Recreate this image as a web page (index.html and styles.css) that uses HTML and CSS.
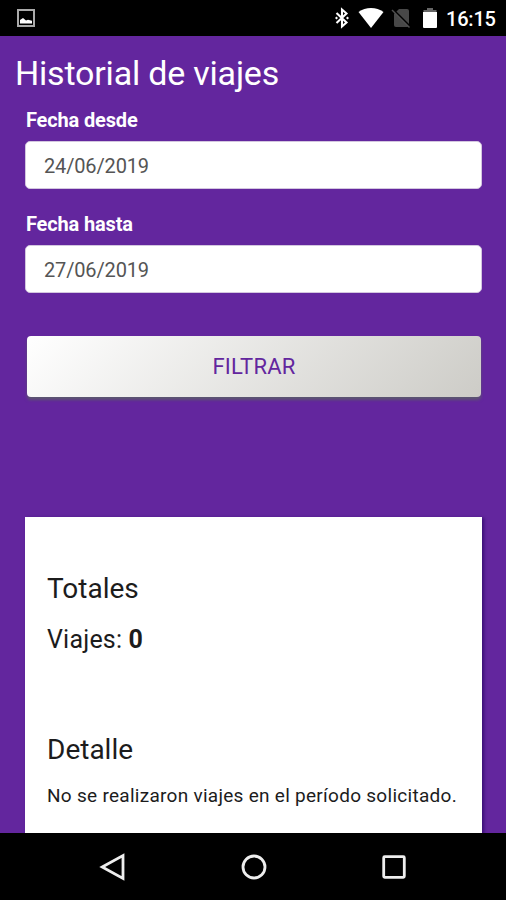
FILE: index.html
```html
<!DOCTYPE html>
<html lang="es">
<head>
  <meta charset="UTF-8">
  <meta name="viewport" content="width=device-width, initial-scale=1">
  <title>Historial de viajes</title>
  <link rel="stylesheet" href="styles.css">
</head>
<body>
  <header class="status-bar">
    <svg class="status-picture" width="18" height="18" viewBox="0 0 18 18">
      <rect x="1" y="1" width="16" height="16" fill="none" stroke="#aaa" stroke-width="2"/>
      <path d="M3 14.500V11l3-2 3 2.500 2-.8 4 1v2.800z" fill="#fff"/>
    </svg>
    <div class="status-icons">
      <svg width="14" height="22" viewBox="0 0 14 22">
        <path d="M1.500 6l10 9.500-4.500 4v-17l4.500 4L1.500 16" fill="none" stroke="#fff" stroke-width="2.100"/>
        <path d="M0 11l1.500-1.500L3 11l-1.500 1.500zM11 11l1.500-1.500L14 11l-1.500 1.500z" fill="#fff"/>
      </svg>
      <svg class="icon-wifi" width="26" height="22" viewBox="0 0 26 22">
        <path d="M13 21L.5 5Q6 1 13 1t12.500 4z" fill="#fff"/>
      </svg>
      <svg class="icon-sim" width="20" height="22" viewBox="0 0 20 22">
        <path d="M8 2h8q2 0 2 2v14q0 2-2 2H5q-2 0-2-2V7z" fill="#484848"/>
        <path d="M1.500 2l18 18" stroke="#000" stroke-width="2"/>
        <path d="M1 3l17.500 17.500" stroke="#505050" stroke-width="1.500"/>
      </svg>
      <svg class="icon-battery" width="14" height="22" viewBox="0 0 14 22">
        <path d="M4 1h6v2h3.500v3H.5V3H4z" fill="#666"/>
        <path d="M0 5h14v15q0 1-1 1H1q-1 0-1-1z" fill="#fff"/>
      </svg>
      <span class="clock">16:15</span>
    </div>
  </header>

  <main class="content">
    <h1>Historial de viajes</h1>

    <div class="filters">
      <label for="desde">Fecha desde</label>
      <input type="text" id="desde" value="24/06/2019">

      <label for="hasta">Fecha hasta</label>
      <input type="text" id="hasta" value="27/06/2019">

      <button type="button" class="btn-filtrar">FILTRAR</button>
    </div>

    <section class="card">
      <h2>Totales</h2>
      <p class="viajes">Viajes: <b>0</b></p>
      <h2>Detalle</h2>
      <p class="detalle">No se realizaron viajes en el período solicitado.</p>
    </section>
  </main>

  <nav class="nav-bar">
    <svg width="28" height="28" viewBox="0 0 28 28">
      <path d="M3.200 14L24 2.500v23z"/>
    </svg>
    <svg width="28" height="28" viewBox="0 0 28 28">
      <circle cx="14" cy="14" r="11"/>
    </svg>
    <svg width="28" height="28" viewBox="0 0 28 28">
      <rect x="3.700" y="3.700" width="20.600" height="20.600" rx="1"/>
    </svg>
  </nav>
</body>
</html>
```

FILE: styles.css
```css
* {
  box-sizing: border-box;
}
body {
  margin: 0;
  height: 900px;
  display: flex;
  flex-direction: column;
  overflow: hidden;
  font-family: Roboto, sans-serif;
  background: #63269e;
}
h1, h2, p {
  margin: 0;
  font-weight: 400;
}
.status-bar {
  height: 36px;
  flex-shrink: 0;
  display: flex;
  justify-content: space-between;
  align-items: center;
  padding: 0 10px 0 17px;
  background: #000;
}
.status-icons {
  display: flex;
  align-items: center;
}
.icon-wifi {
  margin-left: 9px;
}
.icon-sim {
  margin-left: 7px;
}
.icon-battery {
  margin-left: 12px;
}
.clock {
  margin-left: 9px;
  width: 50px;
  padding-top: 1px;
  font-size: 20px;
  font-weight: 500;
  letter-spacing: -0.2px;
  line-height: 22px;
  color: #fff;
  white-space: nowrap;
}
.content {
  flex: 1;
  min-height: 0;
  overflow: hidden;
  padding-top: 17px;
}
h1 {
  padding-left: 15px;
  font-size: 34px;
  line-height: 40px;
  letter-spacing: -0.2px;
  color: #fff;
}
.filters {
  display: flex;
  flex-direction: column;
  padding: 16px 24px 0 25px;
}
label {
  padding-left: 1px;
  margin-bottom: 9px;
  font-size: 20px;
  font-weight: 700;
  line-height: 23px;
  letter-spacing: -0.15px;
  color: #fff;
}
input {
  height: 48px;
  margin-bottom: 24px;
  padding: 1px 18px 0;
  border: 1px solid #d3c6df;
  border-radius: 5px;
  background: #fff;
  font-family: inherit;
  font-size: 20px;
  letter-spacing: -0.15px;
  color: #555;
}
.btn-filtrar {
  height: 61px;
  margin: 19px 1px 0 2px;
  border: none;
  border-radius: 4px;
  background: linear-gradient(135deg, #fff 0%, #cdccc7 100%);
  box-shadow: 0 3px 3px #5c5570;
  font-family: inherit;
  font-size: 22px;
  letter-spacing: 0.2px;
  color: #63269e;
}
.card {
  height: 400px;
  margin: 120px 24px 0 25px;
  padding: 55px 22px 0;
  background: #fff;
  box-shadow: 2px 1px 3px rgba(30, 0, 90, 0.6);
  color: #1c1c1c;
}
h2 {
  font-size: 28px;
  line-height: 34px;
}
.viajes {
  margin: 19px 0 78px;
  font-size: 25px;
  line-height: 30px;
  letter-spacing: 0.2px;
}
.detalle {
  margin-top: 16px;
  font-size: 19px;
  line-height: 26px;
  letter-spacing: 0.28px;
  white-space: nowrap;
}
.nav-bar {
  height: 67px;
  flex-shrink: 0;
  display: flex;
  justify-content: center;
  align-items: center;
  gap: 112.5px;
  padding-left: 1px;
  background: #000;
}
.nav-bar svg {
  fill: none;
  stroke: #eee;
  stroke-width: 2.8;
}
```
